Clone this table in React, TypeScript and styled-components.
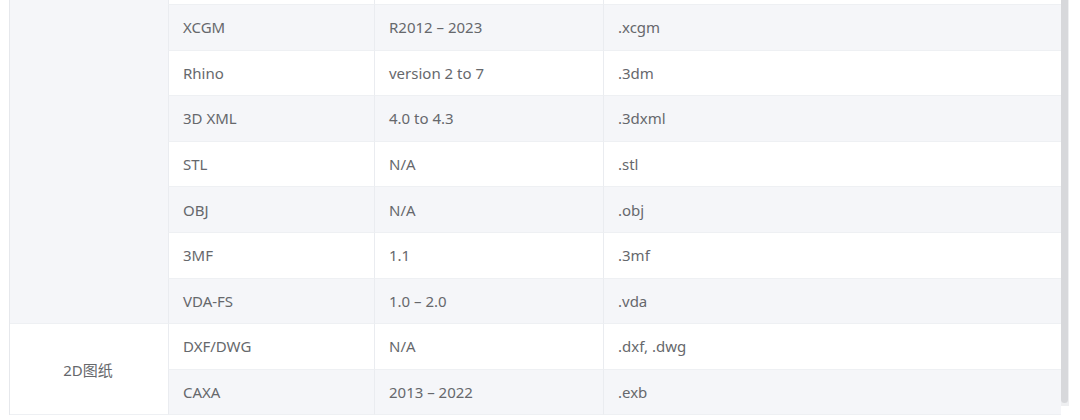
import React from "react";
import styled, { createGlobalStyle } from "styled-components";

const GlobalStyle = createGlobalStyle`
  html, body {
    margin: 0;
    padding: 0;
    background: #ffffff;
  }
  body {
    font-family: "Noto Sans", "Noto Sans CJK SC", sans-serif;
  }
`;

const Frame = styled.div`
  width: 1080px;
  height: 420px;
  overflow: hidden;
  padding-left: 9px;
  box-sizing: border-box;
  display: flex;
  align-items: flex-start;
`;

const Panel = styled.div`
  display: flex;
  align-items: flex-start;
  border-left: 1px solid #e6e8ec;
`;

const Grid = styled.div`
  width: 1051px;
  display: grid;
  grid-template-columns: 158px 206px 229px 1fr;
  grid-template-rows: 5px repeat(9, 45.6px);
  font-size: 15px;
  color: #66686c;
`;

const GroupCell = styled.div<{ $shaded?: boolean; $rows: string }>`
  grid-column: 1;
  grid-row: ${(p) => p.$rows};
  display: flex;
  align-items: center;
  justify-content: center;
  padding-right: 2px;
  background: ${(p) => (p.$shaded ? "#f5f6f9" : "#ffffff")};
  border-bottom: 1px solid #eef0f3;
  box-sizing: border-box;
`;

const Cell = styled.div<{ $shaded?: boolean }>`
  display: flex;
  align-items: center;
  padding-left: 14px;
  background: ${(p) => (p.$shaded ? "#f5f6f9" : "#ffffff")};
  border-left: 1px solid #eaecf0;
  border-bottom: 1px solid #eef0f3;
  box-sizing: border-box;
  white-space: nowrap;
`;

const ScrollTrack = styled.div`
  width: 8px;
  height: 406px;
  background: #eeeff1;
  display: flex;
`;

const Thumb = styled.div`
  width: 7px;
  height: 403px;
  background: #d7d8db;
  border-radius: 0 0 4px 4px;
`;

type Row = { name: string; version: string; ext: string };

const models: Row[] = [
  { name: "XCGM", version: "R2012 – 2023", ext: ".xcgm" },
  { name: "Rhino", version: "version 2 to 7", ext: ".3dm" },
  { name: "3D XML", version: "4.0 to 4.3", ext: ".3dxml" },
  { name: "STL", version: "N/A", ext: ".stl" },
  { name: "OBJ", version: "N/A", ext: ".obj" },
  { name: "3MF", version: "1.1", ext: ".3mf" },
  { name: "VDA-FS", version: "1.0 – 2.0", ext: ".vda" },
];

const drawings: Row[] = [
  { name: "DXF/DWG", version: "N/A", ext: ".dxf, .dwg" },
  { name: "CAXA", version: "2013 – 2022", ext: ".exb" },
];

const Rows = ({ rows, start }: { rows: Row[]; start: number }) => (
  <>
    {rows.map((r, i) => {
      const shaded = (start + i) % 2 === 0;
      return (
        <React.Fragment key={r.name}>
          <Cell $shaded={shaded}>{r.name}</Cell>
          <Cell $shaded={shaded}>{r.version}</Cell>
          <Cell $shaded={shaded}>{r.ext}</Cell>
        </React.Fragment>
      );
    })}
  </>
);

export default function App() {
  return (
    <>
      <GlobalStyle />
      <Frame>
        <Panel>
          <Grid>
            <GroupCell $shaded $rows="1 / span 8" />
            <Cell />
            <Cell />
            <Cell />
            <Rows rows={models} start={0} />
            <GroupCell $rows="9 / span 2">2D图纸</GroupCell>
            <Rows rows={drawings} start={7} />
          </Grid>
          <ScrollTrack>
            <Thumb />
          </ScrollTrack>
        </Panel>
      </Frame>
    </>
  );
}
